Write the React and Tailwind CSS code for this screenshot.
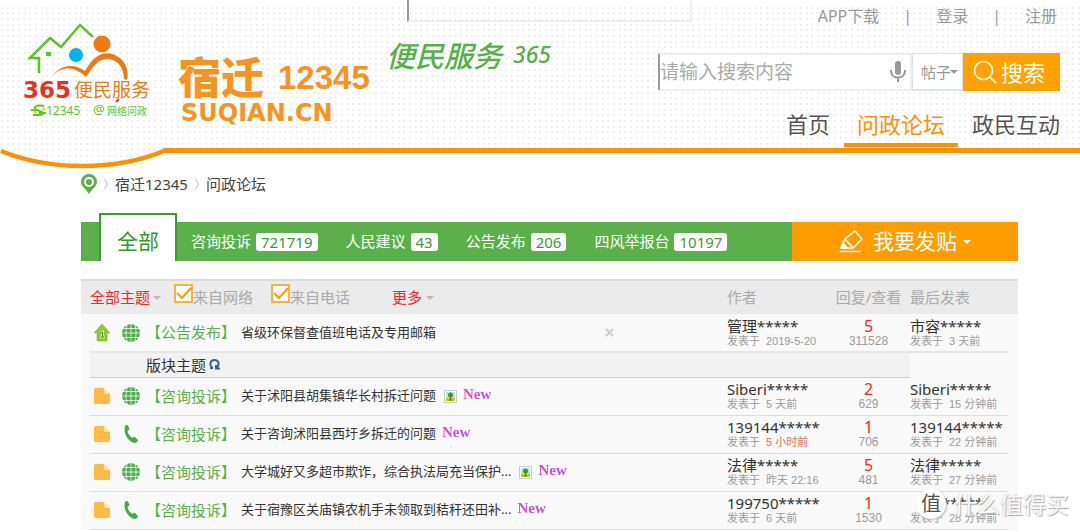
import React, { useState } from 'react';

const boards = [
  { name: '咨询投诉', count: 721719 },
  { name: '人民建议', count: 43 },
  { name: '公告发布', count: 206 },
  { name: '四风举报台', count: 10197 },
];

const threads = [
  {
    id: 1, source: 'web', type: '咨询投诉', title: '关于沭阳县胡集镇华长村拆迁问题', image: true,
    author: 'Siberi*****', date: '5 天前', replies: 2, views: 629, last: 'Siberi*****', lastDate: '15 分钟前',
  },
  {
    id: 2, source: 'phone', type: '咨询投诉', title: '关于咨询沭阳县西圩乡拆迁的问题',
    author: '139144*****', date: '5 小时前', recent: true, replies: 1, views: 706, last: '139144*****', lastDate: '22 分钟前',
  },
  {
    id: 3, source: 'web', type: '咨询投诉', title: '大学城好又多超市欺诈，综合执法局充当保护...', image: true,
    author: '法律*****', date: '昨天 22:16', replies: 5, views: 481, last: '法律*****', lastDate: '27 分钟前',
  },
  {
    id: 4, source: 'phone', type: '咨询投诉', title: '关于宿豫区关庙镇农机手未领取到秸秆还田补...',
    author: '199750*****', date: '6 天前', replies: 1, views: 1530, last: '*****', lastDate: '28 分钟前', hiddenName: true,
  },
];

const dots = [1, 7, 12];

function DotPattern({ id }) {
  return (
    <defs>
      <pattern id={id} width="17" height="17" patternUnits="userSpaceOnUse">
        {dots.map((y) => dots.map((x) => (
          <rect key={`${x}-${y}`} x={x} y={y} width="2" height="2" fill="#eeeeee" />
        )))}
      </pattern>
    </defs>
  );
}

function HouseLogo() {
  return (
    <svg width="132" height="100" viewBox="0 0 132 100" className="shrink-0" role="img" aria-label="365便民服务">
      <path d="M15 51V36H6L26 16l11 9L56 3l13 12" fill="none" stroke="#5cc52a" strokeWidth="2.600" />
      <rect x="22" y="30" width="5" height="4" fill="#5cc52a" />
      <circle cx="52" cy="33" r="7" fill="#00b4f0" />
      <circle cx="78" cy="22" r="8.500" fill="#ee7a14" />
      <path d="M28 54C39 41 51 42 61 49C72 29 84 30 91 33C103 39 105 50 103 58L100 57C100 44 92 37 83 37C73 37 68 47 62 55C51 45 40 43 28 54Z" fill="#ee7a14" />
      <text x="-1" y="76" fontFamily="DejaVu Sans" fontWeight="700" fontSize="23" fill="#e6331f">365</text>
      <text x="50" y="75" fontFamily="Noto Sans CJK SC, sans-serif" fontSize="19" fill="#ee7a14">便民服务</text>
      <path d="M95 77l-3 3" stroke="#e6331f" strokeWidth="2" />
      <path d="M20 84C12 82 8 86 13 88S22 91 17 93H9M7 88h7M15 91h7" fill="none" stroke="#5cc52a" strokeWidth="2" />
      <circle cx="11" cy="90" r="1.500" fill="#f5c518" />
      <circle cx="20" cy="87" r="1.500" fill="#f5c518" />
      <text x="22" y="93" fontFamily="Noto Sans, sans-serif" fontSize="12" fill="#5cc52a">12345</text>
      <text x="69" y="92" fontFamily="Noto Sans, sans-serif" fontSize="13" fill="#5cc52a">@</text>
      <text x="83" y="93" fontFamily="Noto Sans CJK SC, sans-serif" fontSize="10" fill="#5cc52a">网络问政</text>
    </svg>
  );
}

function BrandLogo() {
  return (
    <svg width="200" height="96" viewBox="0 -20 200 96" className="shrink-0" role="img" aria-label="宿迁12345">
      <g fill="#f7941d">
        <text x="0" y="42" fontFamily="Noto Sans CJK SC, sans-serif" fontWeight="900" fontSize="43">宿迁</text>
        <text x="100" y="37" fontFamily="Liberation Sans, sans-serif" fontWeight="700" fontSize="33">12345</text>
        <text x="3" y="69" fontFamily="DejaVu Sans, sans-serif" fontWeight="700" fontSize="24">SUQIAN.CN</text>
      </g>
    </svg>
  );
}

function Slogan() {
  return (
    <svg width="172" height="52" viewBox="0 0 172 52" className="shrink-0" role="img" aria-label="便民服务365">
      <g fill="#57b04a" fontStyle="italic" fontWeight="500">
        <text x="0" y="35" fontFamily="Noto Sans CJK SC, sans-serif" fontSize="29">便民服务</text>
        <text x="127" y="31" fontFamily="Noto Sans, sans-serif" fontSize="23">365</text>
      </g>
    </svg>
  );
}

function Caret({ className }) {
  return (
    <svg viewBox="0 0 8 4" width="8" height="4" className={className} aria-hidden="true">
      <path d="M0 0h8L4 4z" fill="currentColor" />
    </svg>
  );
}

function Chevron() {
  return (
    <svg width="4" height="12" viewBox="0 0 4 12" aria-hidden="true">
      <path d="M.5 1l3 5-3 5" fill="none" stroke="#bbb" />
    </svg>
  );
}

function MicIcon() {
  return (
    <svg width="16" height="22" viewBox="0 0 16 22" aria-hidden="true">
      <rect x="5" y="0" width="6" height="14" rx="3" fill="#999" />
      <path d="M1 9v1c0 4 3 6.500 7 6.500s7-2.500 7-6.500V9M8 16v5" fill="none" stroke="#999" strokeWidth="2" />
    </svg>
  );
}

function SearchIcon() {
  return (
    <svg width="24" height="24" viewBox="0 0 24 24" fill="none" stroke="currentColor" strokeWidth="1.500" aria-hidden="true">
      <circle cx="10.500" cy="10.500" r="9" />
      <path d="M17 17l6 6" />
    </svg>
  );
}

function PinIcon() {
  return (
    <svg width="16" height="20" viewBox="0 0 16 20" aria-hidden="true">
      <path d="M8 0a8 8 0 0 0-8 8c0 4 5 7 8 12 3-5 8-8 8-12a8 8 0 0 0-8-8z" fill="#5bb04c" />
      <circle cx="8" cy="8" r="4" fill="none" stroke="#fff" strokeWidth="2" />
    </svg>
  );
}

function PencilIcon() {
  return (
    <svg width="24" height="24" viewBox="0 0 24 24" fill="none" stroke="currentColor" strokeWidth="1.500" aria-hidden="true">
      <path d="M2 18l4-9L16 1l7 8-9 9H2M6 9l8 9M1 21.500h21" />
      <path d="M2 18l2-5 4 5z" fill="currentColor" />
    </svg>
  );
}

function GlobeIcon() {
  return (
    <svg width="18" height="18" viewBox="0 0 18 18" aria-hidden="true">
      <circle cx="9" cy="9" r="9" fill="#4dae4a" />
      <path d="M9 0v18M0 9h18M1 4.500h16M1 13.500h16M5.500 0C3.500 5 3.500 13 5.500 18M12.500 0c2 5 2 13 0 18" fill="none" stroke="#f9f9f9" strokeWidth=".8" />
    </svg>
  );
}

function PhoneIcon() {
  return (
    <svg width="18" height="18" viewBox="0 0 18 18" aria-hidden="true">
      <path d="M3 1C4 0 5.500-.5 6 .5L7.500 4C7.500 5 6 5 5.500 6C6 9 8 11.500 10.500 13C11.500 12.500 12 11.500 13 12L16 15C16 16.500 14.500 18 12.500 18C6 16.500 1 8 3 1z" fill="#45ab48" />
    </svg>
  );
}

function NoteIcon() {
  return (
    <svg width="16" height="16" viewBox="0 0 16 16" aria-hidden="true">
      <path d="M1.500 0H10l6 6v8.500a1.500 1.500 0 0 1-1.500 1.500h-13A1.500 1.500 0 0 1 0 14.500v-13A1.500 1.500 0 0 1 1.500 0z" fill="#fdbb45" />
      <path d="M10 0v5a1 1 0 0 0 1 1h5z" fill="#fee3b0" />
    </svg>
  );
}

function PinnedIcon() {
  return (
    <svg width="16" height="18" viewBox="0 0 16 18" aria-hidden="true">
      <path d="M8 0l8 9h-3v8H3V9H0z" fill="#8cc932" stroke="#72ad25" strokeWidth=".5" />
      <path d="M7 8h1.500v5M6 13h5" fill="none" stroke="#e9f7c8" strokeWidth="2.500" />
      <path d="M7 8.500h1.500V13M6.500 13h4" fill="none" stroke="#3c7a12" />
    </svg>
  );
}

function PictureIcon() {
  return (
    <svg width="13" height="13" viewBox="0 0 13 13" aria-hidden="true">
      <rect x=".5" y=".5" width="12" height="12" fill="#fff" stroke="#c9cdbb" />
      <rect x="2" y="2" width="9" height="6" fill="#b9e3f7" />
      <rect x="2" y="8" width="9" height="3" fill="#a9d318" />
      <circle cx="6.500" cy="5" r="2.500" fill="#3f9a1c" />
      <path d="M6.500 6v4M5 10h3" stroke="#8a5a14" />
    </svg>
  );
}

function Header() {
  const [keyword, setKeyword] = useState('');

  return (
    <header className="relative">
      <svg className="absolute inset-x-0 top-0 w-full h-[146px]" aria-hidden="true">
        <DotPattern id="dots" />
        <rect y="6" width="100%" height="100%" fill="url(#dots)" />
      </svg>
      <div className="relative flex h-[148px] pl-6 pr-5">
        <div className="flex pt-[22px]">
          <HouseLogo />
          <div className="pt-[10px] pl-[22px] w-[230px]">
            <BrandLogo />
          </div>
        </div>
        <div className="flex flex-1 flex-col">
          <div className="flex justify-between h-8">
            <input
              aria-label="快速搜索"
              className="ml-[21px] w-[285px] h-[22px] border-l-2 border-l-[#999] border-r-2 border-b-2 border-r-[#eee] border-b-[#eee] outline-none"
            />
            <ul className="flex items-center gap-6 text-[16px] text-[#999] pr-[3px]">
              <li><a href="#app">APP下载</a></li>
              <li aria-hidden="true">|</li>
              <li><a href="#login">登录</a></li>
              <li aria-hidden="true">|</li>
              <li><a href="#register">注册</a></li>
            </ul>
          </div>
          <div className="flex h-[59px] justify-between">
            <Slogan />
            <form className="flex h-[38px] mt-[21px]" onSubmit={(e) => e.preventDefault()}>
              <div className="flex items-center w-[254px] bg-white border-2 border-[#eee] border-l-[#999] pr-1">
                <input
                  aria-label="搜索"
                  placeholder="请输入搜索内容"
                  value={keyword}
                  onChange={(e) => setKeyword(e.target.value)}
                  className="flex-1 min-w-0 text-[19px] leading-6 text-[#555] placeholder:text-[#aaa] outline-none"
                />
                <button type="button" aria-label="语音输入"><MicIcon /></button>
              </div>
              <div className="relative flex items-center w-[51px] bg-white border border-[#d9e6ee] border-b-2">
                <select aria-label="搜索类型" className="appearance-none w-full pl-2 text-[15px] leading-6 text-[#999] outline-none">
                  <option>帖子</option>
                </select>
                <Caret className="absolute right-1 text-[#999] pointer-events-none" />
              </div>
              <button type="submit" className="flex items-center gap-1 px-[10px] bg-[#ffa200] text-white text-[22px] w-[97px]">
                <SearchIcon />
                <span className="whitespace-nowrap">搜索</span>
              </button>
            </form>
          </div>
          <nav className="flex justify-end gap-[14px] mt-[14px] text-[22px] leading-[38px] text-[#555]">
            <a href="#home" className="h-[42px]">首页</a>
            <a href="#forum" className="h-[42px] px-[13px] text-[#ff9000] border-b-4 border-[#ff9000]">问政论坛</a>
            <a href="#interact" className="h-[42px]">政民互动</a>
          </nav>
        </div>
      </div>
      <div className="relative flex">
        <svg width="163" height="22" viewBox="0 0 163 22" className="shrink-0" aria-hidden="true">
          <path d="M2 3C50 23 115 23 163 3V0H2z" fill="url(#dots)" />
          <path d="M1 3C50 23 115 23 164 3" fill="none" stroke="#ff9000" strokeWidth="4.500" />
        </svg>
        <div className="flex-1 h-[5px] bg-[#ff9000]" />
      </div>
    </header>
  );
}

function BoardTabs() {
  return (
    <div className="flex items-end mt-[22px]">
      <nav className="flex flex-1 items-end h-[39px] pl-[18px] bg-[#5bb04c] text-white text-[15px] whitespace-nowrap">
        <a href="#all" className="w-[78px] h-12 leading-[52px] text-center text-[21px] text-[#2f9a2b] bg-white border-2 border-b-0 border-[#3c9c34]">
          全部
        </a>
        <ul className="flex items-center gap-7 h-full pl-[14px]">
          {boards.map((board) => (
            <li key={board.name}>
              <a href="#board" className="flex items-center gap-[5px]">
                {board.name}
                <span className="px-[5px] h-[18px] leading-[18px] rounded-[3px] bg-white text-[#3c9c34]">{board.count}</span>
              </a>
            </li>
          ))}
        </ul>
      </nav>
      <button type="button" className="flex items-center justify-center w-[226px] h-[39px] bg-[#ff9d00] text-white text-[21px]">
        <PencilIcon />
        <span className="ml-[10px] mr-[6px]">我要发贴</span>
        <Caret />
      </button>
    </div>
  );
}

function SourceFilter({ id, label }) {
  const [checked, setChecked] = useState(true);

  return (
    <div className="flex items-center">
      <span className="relative w-[19px] h-[19px] mb-2">
        <input
          id={id}
          type="checkbox"
          checked={checked}
          onChange={() => setChecked(!checked)}
          className="block appearance-none w-[19px] h-[19px] bg-white border-2 border-[#fbb040]"
        />
        {checked && (
          <svg viewBox="0 0 19 19" className="absolute inset-0 pointer-events-none" aria-hidden="true">
            <path d="M3 9l5 5 9-10" fill="none" stroke="#ff9900" strokeWidth="2" />
          </svg>
        )}
      </span>
      <label htmlFor={id}>{label}</label>
    </div>
  );
}

function Person({ name, date, recent, hiddenName }) {
  return (
    <>
      <a href="#user" className={hiddenName ? 'block pl-8 leading-4 text-[#333]' : 'block leading-4 text-[#333]'}>{name}</a>
      <p className="flex gap-[6px] font-['Liberation_Sans','Noto_Sans_CJK_SC',sans-serif] text-[11px] leading-[14px] text-[#999] whitespace-nowrap">
        <span>发表于</span>
        <span className={recent ? 'text-[#f26c4f]' : ''}>{date}</span>
      </p>
    </>
  );
}

function Replies({ replies, views }) {
  return (
    <>
      <a href="#replies" className="block leading-4 text-[16px] text-[#f22]">{replies}</a>
      <p className="font-['Liberation_Sans',sans-serif] text-[12px] leading-[14px] text-[#999]">{views}</p>
    </>
  );
}

function ThreadTable() {
  return (
    <table className="w-full mt-[18px] table-fixed bg-[#f9f9f9] text-[15px] text-left">
      <colgroup>
        <col className="w-[9px]" />
        <col />
        <col className="w-[100px]" />
        <col className="w-[83px]" />
        <col className="w-[98px]" />
        <col className="w-[10px]" />
      </colgroup>
      <thead>
        <tr className="h-[34px] bg-[#ebebeb] border-t-2 border-[#dcdcdc] text-[#aaa] whitespace-nowrap">
          <td />
          <th className="font-normal p-0">
            <div className="flex items-center">
              <button type="button" className="flex items-center gap-[3px] text-[#f22]">
                全部主题<Caret className="text-[#bbb]" />
              </button>
              <div className="ml-[13px]"><SourceFilter id="from-web" label="来自网络" /></div>
              <div className="ml-[18px]"><SourceFilter id="from-phone" label="来自电话" /></div>
              <button type="button" className="flex items-center gap-1 ml-[42px] text-[#f22]">
                更多<Caret className="text-[#bbb]" />
              </button>
            </div>
          </th>
          <th className="font-normal p-0">作者</th>
          <th className="font-normal p-0 text-center">回复/查看</th>
          <th className="font-normal p-0">最后发表</th>
          <td />
        </tr>
      </thead>
      <tbody>
        <tr className="h-[38px]">
          <td />
          <td className="border-b-2 border-[#e6e6e6]">
            <div className="flex items-center pl-1">
              <PinnedIcon />
              <span className="ml-3"><GlobeIcon /></span>
              <a href="#type" className="ml-[6px] w-[95px] text-[#5bb04c]">【公告发布】</a>
              <a href="#thread" className="text-[13px] text-[#333]">省级环保督查值班电话及专用邮箱</a>
              <button type="button" aria-label="隐藏置顶帖" className="ml-auto mr-[113px] text-[#ccc]">
                <svg width="9" height="9" viewBox="0 0 9 9"><path d="M1 1l7 7M8 1L1 8" stroke="currentColor" strokeWidth="2" /></svg>
              </button>
            </div>
          </td>
          <td className="border-b-2 border-[#e6e6e6]"><Person name="管理*****" date="2019-5-20" /></td>
          <td className="border-b-2 border-[#e6e6e6] text-center"><Replies replies={5} views={311528} /></td>
          <td className="border-b-2 border-[#e6e6e6]"><Person name="市容*****" date="3 天前" /></td>
          <td />
        </tr>
        <tr className="h-[25px]">
          <td />
          <td colSpan={3} className="bg-[#f2f2f2] border-b border-[#cdcdcd]">
            <div className="flex items-center gap-[3px] pl-14 leading-[22px] text-[#333]">
              版块主题
              <button type="button" aria-label="刷新">
                <svg width="11" height="11" viewBox="0 0 11 11" fill="none" stroke="#2f6090" strokeWidth="2">
                  <path d="M4 9H1M3.500 9C0 6 1 1 5.500 1S11 6 7.500 9M7 6v3.500h4" />
                </svg>
              </button>
            </div>
          </td>
          <td />
          <td />
        </tr>
        {threads.map((thread) => (
          <tr key={thread.id} className="h-[38px]">
            <td />
            <td className="border-b border-[#dcdcdc]">
              <div className="flex items-center pl-1 whitespace-nowrap">
                <NoteIcon />
                <span className="ml-3">{thread.source === 'web' ? <GlobeIcon /> : <PhoneIcon />}</span>
                <a href="#type" className="ml-[6px] w-[95px] text-[#5bb04c]">{`【${thread.type}】`}</a>
                <a href="#thread" className="text-[13px] text-[#333]">{thread.title}</a>
                {thread.image && <span className="ml-2"><PictureIcon /></span>}
                <span className="ml-[6px] mb-1 font-['Liberation_Serif',serif] font-bold text-[15px] leading-4 bg-linear-to-r from-[#f040b0] to-[#b848f8] bg-clip-text text-transparent">
                  New
                </span>
              </div>
            </td>
            <td className="border-b border-[#dcdcdc]"><Person name={thread.author} date={thread.date} recent={thread.recent} /></td>
            <td className="border-b border-[#dcdcdc] text-center"><Replies replies={thread.replies} views={thread.views} /></td>
            <td className="border-b border-[#dcdcdc]"><Person name={thread.last} date={thread.lastDate} hiddenName={thread.hiddenName} /></td>
            <td />
          </tr>
        ))}
      </tbody>
    </table>
  );
}

function App() {
  return (
    <div className="relative bg-white font-['Noto_Sans','Noto_Sans_CJK_SC',sans-serif]">
      <Header />
      <main className="pl-[81px] pr-[62px]">
        <div className="flex items-center gap-[7px] h-8 -mt-[2px] text-[15px] text-[#444]">
          <PinIcon />
          <Chevron />
          <a href="#home">宿迁12345</a>
          <Chevron />
          <a href="#forum">问政论坛</a>
        </div>
        <BoardTabs />
        <ThreadTable />
      </main>
      <div className="absolute right-[11px] bottom-[10px] flex items-center gap-2 pointer-events-none">
        <span className="flex items-center justify-center w-[30px] h-[30px] rounded-full bg-white text-[20px] text-[#555] shadow-[1px_1px_2px_#bbb]">值</span>
        <span className="text-[23px] leading-8 text-white/90 [text-shadow:1px_1px_1px_#aaa,-1px_0_1px_#ddd]">什么值得买</span>
      </div>
    </div>
  );
}

export default App;
